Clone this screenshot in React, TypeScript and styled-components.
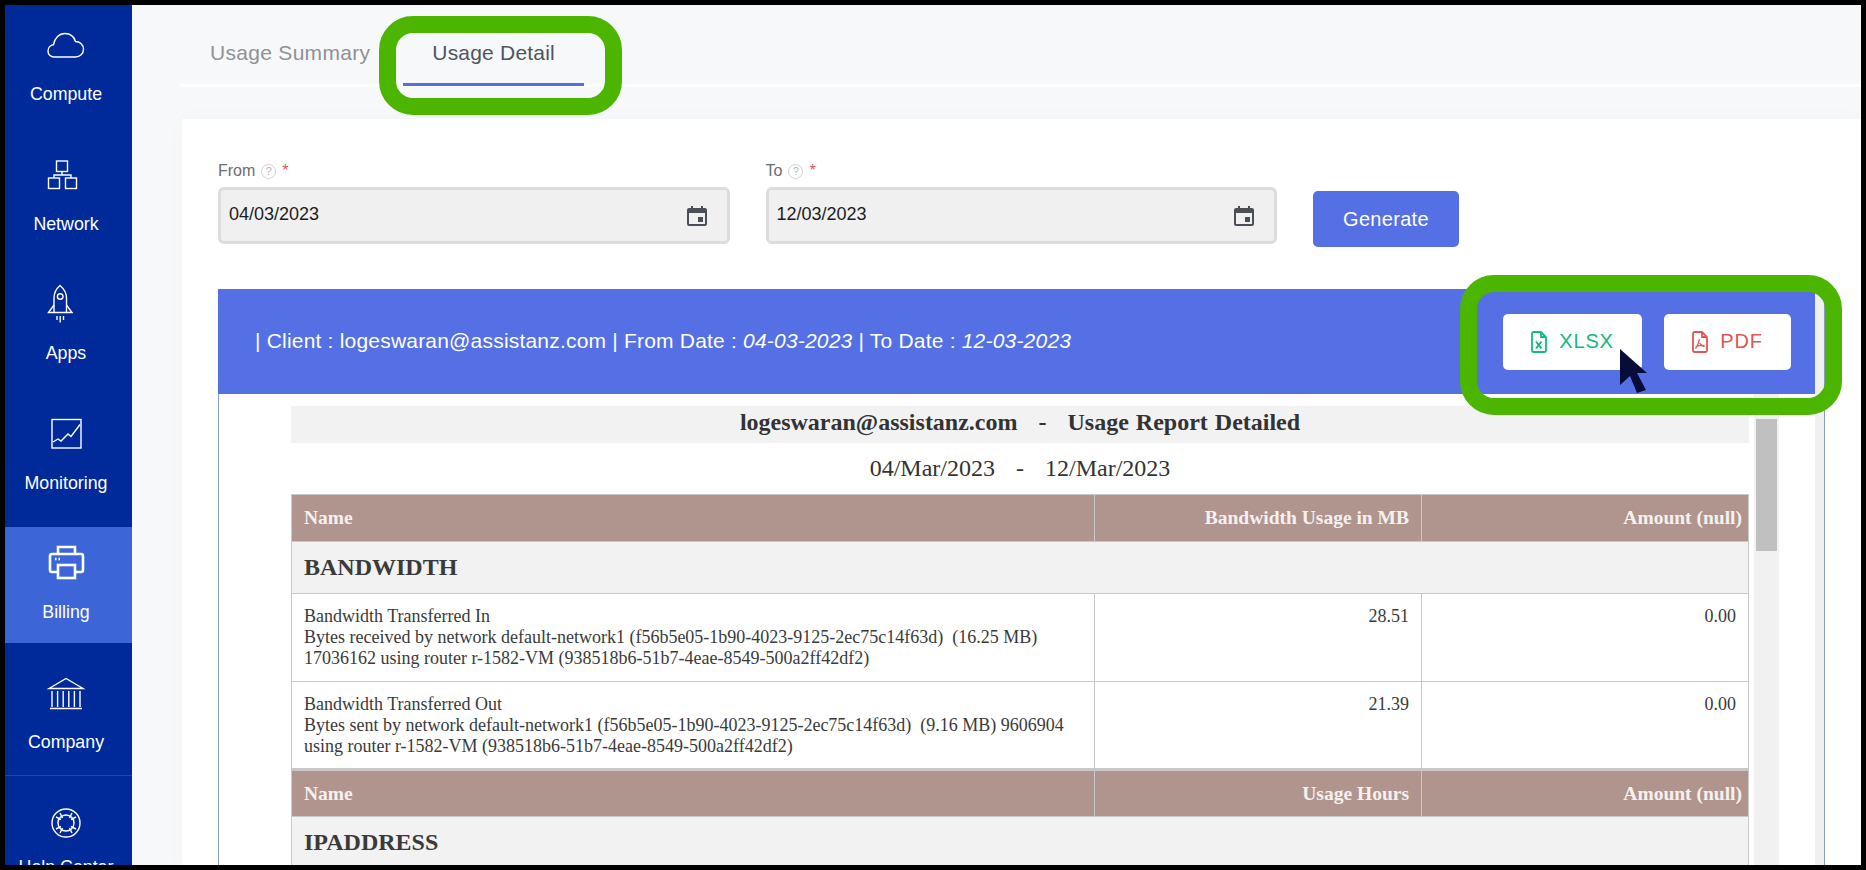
import React from "react";
import styled, { createGlobalStyle } from "styled-components";

const GlobalStyle = createGlobalStyle`
  html, body {
    margin: 0;
    padding: 0;
    background: #000;
  }
  * {
    box-sizing: border-box;
  }
`;

const Frame = styled.div`
  position: relative;
  width: 1866px;
  height: 870px;
  border: 5px solid #000;
  display: flex;
  overflow: hidden;
  font-family: "Liberation Sans", Arial, sans-serif;
`;

const Sidebar = styled.nav`
  width: 127px;
  flex-shrink: 0;
  background: #002a9a;
  padding: 4px 5px 0 0;
  display: flex;
  flex-direction: column;
  gap: 13.6px;
`;

const NavItem = styled.div<{ $active?: boolean; $divided?: boolean }>`
  position: relative;
  height: 116px;
  flex-shrink: 0;
  padding-top: 16px;
  margin-right: ${(p) => (p.$active ? "-5px" : "0")};
  background: ${(p) => (p.$active ? "#3c66d8" : "transparent")};
  color: #fff;
  display: flex;
  flex-direction: column;
  align-items: center;
  ${(p) =>
    p.$divided &&
    `
    &::after {
      content: "";
      position: absolute;
      left: 0;
      right: -5px;
      bottom: -3px;
      height: 1px;
      background: #1f44ad;
    }
  `}
`;

const NavIcon = styled.svg.attrs({ viewBox: "0 0 40 40" })<{ $active?: boolean }>`
  width: 40px;
  height: 40px;
  flex-shrink: 0;
  fill: none;
  stroke: #fff;
  stroke-width: ${(p) => (p.$active ? 2.6 : 1.4)};
  margin-right: ${(p) => (p.$active ? "5px" : "0")};
`;

const NavLabel = styled.span<{ $active?: boolean; $tight?: boolean }>`
  margin-top: ${(p) => (p.$tight ? "14px" : "19px")};
  margin-right: ${(p) => (p.$active ? "5px" : "0")};
  font-size: 17.8px;
  line-height: 20px;
  white-space: nowrap;
`;

const Main = styled.main`
  flex: 1;
  min-width: 0;
  background: #f7f8fa;
  padding-left: 48px;
`;

const TabBar = styled.div`
  height: 82px;
  border-bottom: 3px solid #fff;
  display: flex;
  gap: 3px;
`;

const Tab = styled.div<{ $active?: boolean }>`
  height: 81px;
  padding: 35px ${(p) => (p.$active ? "29px" : "30px")} 0;
  margin-bottom: -2px;
  font-size: 21px;
  line-height: 26px;
  letter-spacing: ${(p) => (p.$active ? "0.2px" : "0.3px")};
  color: ${(p) => (p.$active ? "#50555e" : "#8f9296")};
  border-bottom: ${(p) => (p.$active ? "3px solid #5570e5" : "3px solid transparent")};
`;

const Card = styled.section`
  margin: 32px 0 0 2px;
  height: 760px;
  background: #fff;
  padding: 45px 36px 0;
  box-shadow: 0 0 24px rgba(0, 0, 0, 0.02);
`;

const FilterRow = styled.div`
  display: flex;
  gap: 36px;
`;

const Field = styled.div`
  width: 511.5px;
`;

const FieldLabel = styled.div`
  height: 23px;
  display: flex;
  align-items: flex-start;
  gap: 6px;
  font-size: 16px;
  line-height: 16px;
  margin-top: -1px;
  padding-bottom: 1px;
  color: #6a6d72;
`;

const HelpMark = styled.span`
  width: 15px;
  height: 15px;
  margin-top: 1px;
  border: 1.5px solid #d0d0d0;
  border-radius: 50%;
  font-size: 11px;
  line-height: 12px;
  text-align: center;
  color: #b5b5b5;
`;

const Required = styled.span`
  color: #e25555;
`;

const DateBox = styled.div`
  height: 57px;
  margin-top: 1px;
  background: #f0f0f0;
  border: 3px solid #dcdcdc;
  border-radius: 6px;
  display: flex;
  align-items: center;
  justify-content: space-between;
  padding: 0 19px 0 8px;
  font-size: 18px;
  color: #1c1c1c;
`;

const DateText = styled.span`
  position: relative;
  top: -1px;
`;

const GenerateButton = styled.button`
  width: 146px;
  height: 56px;
  margin-top: 27px;
  border: none;
  border-radius: 5px;
  background: #5570e5;
  color: #fff;
  font: 20px "Liberation Sans", Arial, sans-serif;
  letter-spacing: 0.3px;
`;

const Report = styled.div`
  margin-top: 42px;
  height: 600px;
  display: flex;
  border-left: 1px solid #8a9cc0;
  border-right: 1px solid #8a9cc0;
`;

const ReportPane = styled.div`
  flex: 1;
  min-width: 0;
`;

const ReportStrip = styled.div`
  width: 9px;
  flex-shrink: 0;
  background: #f0f0f0;
`;

const ReportHeader = styled.div`
  height: 105px;
  background: #5570e5;
  margin-left: -1px;
  padding: 0 24px 0 37px;
  display: flex;
  align-items: center;
  justify-content: space-between;
  color: #fff;
  font-size: 21px;
  letter-spacing: 0.2px;
`;

const HeaderText = styled.span`
  position: relative;
  top: -1px;
`;

const ExportGroup = styled.div`
  display: flex;
  gap: 22px;
`;

const ExportButton = styled.div<{ $tone: string; $wide?: boolean }>`
  width: ${(p) => (p.$wide ? "139px" : "127px")};
  height: 56px;
  border-radius: 5px;
  background: #fff;
  color: ${(p) => p.$tone};
  display: flex;
  align-items: center;
  justify-content: center;
  gap: 12px;
  font-size: 20px;
  letter-spacing: 0.8px;
`;

const ReportBody = styled.div`
  display: flex;
  padding-left: 72px;
`;

const ReportSheet = styled.div`
  width: 1458px;
  flex-shrink: 0;
  padding-top: 12px;
`;

const SheetTitle = styled.div`
  height: 37px;
  background: #f2f2f2;
  font: bold 24px/32px "Liberation Serif", "Times New Roman", serif;
  word-spacing: 1px;
  text-align: center;
  white-space: pre;
  color: #333;
`;

const SheetDates = styled.div`
  height: 51px;
  font: 24px/50px "Liberation Serif", "Times New Roman", serif;
  word-spacing: 1px;
  text-align: center;
  white-space: pre;
  color: #333;
`;

const UsageTable = styled.table`
  width: 1457px;
  table-layout: fixed;
  border-collapse: collapse;
  font-family: "Liberation Serif", "Times New Roman", serif;
  color: #3a3a3a;
`;

const HeadRow = styled.tr`
  height: 47px;
  background: #b0958e;
`;

const HeadCell = styled.th<{ $right?: boolean; $padRight?: number; $thick?: boolean }>`
  border: 1px solid #c8c8c8;
  border-top-width: ${(p) => (p.$thick ? "3px" : "1px")};
  padding: 0 ${(p) => p.$padRight ?? 12}px 0 12px;
  font-size: 19.5px;
  font-weight: bold;
  text-align: ${(p) => (p.$right ? "right" : "left")};
  color: #f5f1ef;
`;

const GroupCell = styled.td`
  height: 52px;
  border: 1px solid #c8c8c8;
  background: #f2f2f2;
  padding: 0 12px;
  font-size: 24px;
  font-weight: bold;
`;

const BodyCell = styled.td<{ $right?: boolean; $padRight?: number }>`
  height: 88px;
  vertical-align: top;
  border: 1px solid #c8c8c8;
  padding: 12px ${(p) => p.$padRight ?? 12}px 0 12px;
  font-size: 18px;
  line-height: 21px;
  text-align: ${(p) => (p.$right ? "right" : "left")};
`;

const ScrollTrack = styled.div`
  width: 25px;
  height: 480px;
  margin-left: 5px;
  flex-shrink: 0;
  background: #f1f1f1;
  padding: 25px 2px 0;
`;

const ScrollThumb = styled.div`
  height: 132px;
  background: #c0c0c0;
`;

const Callout = styled.div<{ $left: number; $top: number; $w: number; $h: number }>`
  position: absolute;
  left: ${(p) => p.$left}px;
  top: ${(p) => p.$top}px;
  width: ${(p) => p.$w}px;
  height: ${(p) => p.$h}px;
  border: 17px solid #4cb500;
  border-radius: 34px;
  pointer-events: none;
`;

const Pointer = styled.svg`
  position: absolute;
  left: 1615px;
  top: 344px;
  width: 30px;
  height: 44px;
`;

const CalendarIcon = () => (
  <svg width="22" height="20" viewBox="0 0 22 20">
    <path
      fill="#4a4f57"
      d="M5 0h2v2h8V0h2v2h2a2 2 0 0 1 2 2v14a2 2 0 0 1-2 2H3a2 2 0 0 1-2-2V4a2 2 0 0 1 2-2h2zM3 7v11h16V7z"
      fillRule="evenodd"
    />
    <rect x="12" y="11" width="5" height="5" fill="#4a4f57" />
  </svg>
);

const XlsxIcon = () => (
  <svg width="16" height="22" viewBox="0 0 16 22" fill="none" stroke="currentColor" strokeWidth="1.8">
    <path d="M2.5 1h7.5l5 5v13.5a1.5 1.5 0 0 1-1.5 1.5h-11A1.5 1.5 0 0 1 1 19.5V2.5A1.5 1.5 0 0 1 2.5 1z" />
    <path d="M10 1v5h5" />
    <path d="M5 10.5l5.5 7M10.5 10.5l-5.5 7" strokeWidth="2" />
  </svg>
);

const PdfIcon = () => (
  <svg width="16" height="22" viewBox="0 0 16 22" fill="none" stroke="currentColor" strokeWidth="1.8">
    <path d="M2.5 1h7.5l5 5v13.5a1.5 1.5 0 0 1-1.5 1.5h-11A1.5 1.5 0 0 1 1 19.5V2.5A1.5 1.5 0 0 1 2.5 1z" />
    <path d="M10 1v5h5" />
    <path d="M7.5 8c-.5 3-1.5 6-4 9.5M7.5 12c1 2 2.5 3 5 3.5M4 15.5c2.5-1 5-1.5 8.5-1" strokeWidth="1.3" />
  </svg>
);

const navItems = [
  {
    label: "Compute",
    icon: <path d="M8 32C4.5 32 2 29.5 2 26c0-3.5 2.5-6 5.5-6.3C8.500 13 13.500 8.500 19 8.500c5 0 9 3 10.500 8 4.500 0 8 3.500 8 7.800 0 4.300-3.500 7.700-8 7.700z" />,
  },
  {
    label: "Network",
    icon: (
      <>
        <rect x="10.5" y="6" width="11" height="10.5" />
        <rect x="2.5" y="23" width="11" height="10.5" />
        <rect x="19.5" y="23" width="11" height="10.5" />
        <path d="M16 16.5V20M8 23v-3h17v3" />
      </>
    ),
  },
  {
    label: "Apps",
    icon: (
      <>
        <path d="M14 1.5C10.5 4.5 8 9 8 14v14.5h12.5V14c0-5-3-9.5-6.5-12.5z" />
        <circle cx="14.2" cy="12.5" r="2.8" />
        <path d="M8 21l-5.5 7.5H8M20.5 21l5.5 7.5h-5.5M11 32v4M14.2 32v6.5M17.5 32v4" />
      </>
    ),
  },
  {
    label: "Monitoring",
    icon: (
      <>
        <rect x="6" y="5.5" width="29" height="28.5" />
        <path d="M7 28l5-3 3 2 7-7 3 2.5 9-12" />
      </>
    ),
  },
  {
    label: "Billing",
    active: true,
    icon: (
      <>
        <path d="M12 11V4h17v7M12 29H6a2 2 0 0 1-2-2V13a2 2 0 0 1 2-2h29a2 2 0 0 1 2 2v14a2 2 0 0 1-2 2h-6" />
        <rect x="12" y="22" width="17" height="13" />
        <path d="M9 16h1.5M12.5 16H14" strokeWidth="2.5" />
      </>
    ),
  },
  {
    label: "Company",
    divided: true,
    icon: (
      <>
        <path d="M3 15.5L20 5.5l17 10z" />
        <path d="M6 18v16M11.6 18v16M17.2 18v16M22.8 18v16M28.4 18v16M34 18v16M4 35.5h32" />
      </>
    ),
  },
  {
    label: "Help Center",
    tight: true,
    icon: (
      <>
        <circle cx="20" cy="20" r="14" />
        <circle cx="20" cy="20" r="8" />
        <path d="M10 14l5 2.5M14 10l2.5 5M30 14l-5 2.5M26 10l-2.5 5M10 26l5-2.5M14 30l2.5-5M30 26l-5-2.5M26 30l-2.5-5" />
      </>
    ),
  },
];

const Dates = [
  { label: "From", value: "04/03/2023" },
  { label: "To", value: "12/03/2023" },
];

export default function App() {
  return (
    <>
      <GlobalStyle />
      <Frame>
        <Sidebar>
          {navItems.map((item) => (
            <NavItem key={item.label} $active={item.active} $divided={item.divided}>
              <NavIcon $active={item.active}>{item.icon}</NavIcon>
              <NavLabel $active={item.active} $tight={item.tight}>
                {item.label}
              </NavLabel>
            </NavItem>
          ))}
        </Sidebar>
        <Main>
          <TabBar>
            <Tab>Usage Summary</Tab>
            <Tab $active>Usage Detail</Tab>
          </TabBar>
          <Card>
            <FilterRow>
              {Dates.map((d) => (
                <Field key={d.label}>
                  <FieldLabel>
                    {d.label}
                    <HelpMark>?</HelpMark>
                    <Required>*</Required>
                  </FieldLabel>
                  <DateBox>
                    <DateText>{d.value}</DateText>
                    <CalendarIcon />
                  </DateBox>
                </Field>
              ))}
              <GenerateButton>Generate</GenerateButton>
            </FilterRow>
            <Report>
              <ReportPane>
                <ReportHeader>
                  <HeaderText>
                    | Client : logeswaran@assistanz.com | From Date : <em>04-03-2023</em> | To Date :{" "}
                    <em>12-03-2023</em>
                  </HeaderText>
                  <ExportGroup>
                    <ExportButton $tone="#10bb80" $wide>
                      <XlsxIcon />
                      XLSX
                    </ExportButton>
                    <ExportButton $tone="#e05555">
                      <PdfIcon />
                      PDF
                    </ExportButton>
                  </ExportGroup>
                </ReportHeader>
                <ReportBody>
                  <ReportSheet>
                    <SheetTitle>{"logeswaran@assistanz.com   -   Usage Report Detailed"}</SheetTitle>
                    <SheetDates>{"04/Mar/2023   -   12/Mar/2023"}</SheetDates>
                    <UsageTable>
                      <colgroup>
                        <col style={{ width: 803 }} />
                        <col style={{ width: 327 }} />
                        <col style={{ width: 327 }} />
                      </colgroup>
                      <tbody>
                        <HeadRow>
                          <HeadCell>Name</HeadCell>
                          <HeadCell $right>Bandwidth Usage in MB</HeadCell>
                          <HeadCell $right $padRight={6}>Amount (null)</HeadCell>
                        </HeadRow>
                        <tr>
                          <GroupCell colSpan={3}>BANDWIDTH</GroupCell>
                        </tr>
                        <tr>
                          <BodyCell>
                            Bandwidth Transferred In
                            <br />
                            Bytes received by network default-network1 (f56b5e05-1b90-4023-9125-2ec75c14f63d)&nbsp; (16.25 MB)
                            <br />
                            17036162 using router r-1582-VM (938518b6-51b7-4eae-8549-500a2ff42df2)
                          </BodyCell>
                          <BodyCell $right>28.51</BodyCell>
                          <BodyCell $right>0.00</BodyCell>
                        </tr>
                        <tr>
                          <BodyCell>
                            Bandwidth Transferred Out
                            <br />
                            Bytes sent by network default-network1 (f56b5e05-1b90-4023-9125-2ec75c14f63d)&nbsp; (9.16 MB) 9606904
                            <br />
                            using router r-1582-VM (938518b6-51b7-4eae-8549-500a2ff42df2)
                          </BodyCell>
                          <BodyCell $right>21.39</BodyCell>
                          <BodyCell $right>0.00</BodyCell>
                        </tr>
                        <HeadRow>
                          <HeadCell $thick>Name</HeadCell>
                          <HeadCell $thick $right>Usage Hours</HeadCell>
                          <HeadCell $thick $right $padRight={6}>Amount (null)</HeadCell>
                        </HeadRow>
                        <tr>
                          <GroupCell colSpan={3}>IPADDRESS</GroupCell>
                        </tr>
                      </tbody>
                    </UsageTable>
                  </ReportSheet>
                  <ScrollTrack>
                    <ScrollThumb />
                  </ScrollTrack>
                </ReportBody>
              </ReportPane>
              <ReportStrip />
            </Report>
          </Card>
        </Main>
        <Callout $left={374} $top={11} $w={243} $h={99} />
        <Callout $left={1455} $top={270} $w={382} $h={140} />
        <Pointer viewBox="0 0 30 44">
          <path fill="#060d38" d="M0 0L27 24 H17 L26 41 L17 44 L10 27 L0 36Z" />
        </Pointer>
      </Frame>
    </>
  );
}
